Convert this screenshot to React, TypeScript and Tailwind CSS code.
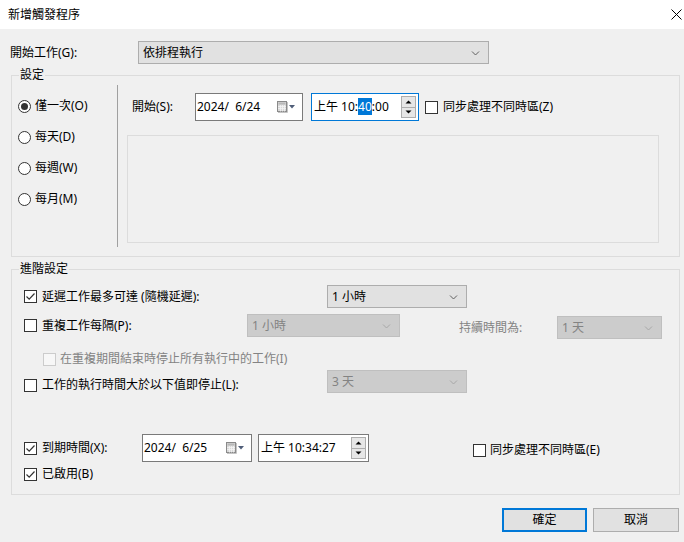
import React from "react";

const Chevron = ({ disabled }: { disabled?: boolean }) => (
  <svg width="9" height="6" viewBox="0 0 9 6" className="shrink-0">
    <path d="M1 1.5 L4.5 5 L8 1.5" fill="none" stroke={disabled ? "#a8a8a8" : "#606060"} strokeWidth="1" />
  </svg>
);

const Select = ({ value, w, disabled }: { value: string; w: string; disabled?: boolean }) => (
  <div
    className={`${w} h-[23px] flex items-center justify-between pl-[4px] pr-[8px] border ${
      disabled ? "bg-[#cccccc] border-[#bfbfbf] text-[#838383]" : "bg-[#e1e1e1] border-[#adadad] text-black"
    }`}
  >
    <span>{value}</span>
    <Chevron disabled={disabled} />
  </div>
);

const Checkbox = ({ checked, disabled }: { checked?: boolean; disabled?: boolean }) => (
  <div
    className={`w-[13px] h-[13px] shrink-0 border flex items-center justify-center ${
      disabled ? "border-[#cccccc] bg-[#f7f7f7]" : "border-[#333333] bg-white"
    }`}
  >
    {checked && (
      <svg width="11" height="11" viewBox="0 0 11 11">
        <path d="M1.5 5.5 L4.2 8.2 L9.5 2.5" fill="none" stroke="#333333" strokeWidth="1.2" />
      </svg>
    )}
  </div>
);

const Radio = ({ checked }: { checked?: boolean }) => (
  <div className="w-[13px] h-[13px] shrink-0 rounded-full border border-[#333333] bg-white flex items-center justify-center">
    {checked && <div className="w-[7px] h-[7px] rounded-full bg-[#333333]" />}
  </div>
);

const CalendarIcon = () => (
  <svg width="20" height="12" viewBox="0 0 20 12" className="shrink-0">
    <rect x="1.5" y="0.5" width="9" height="10" fill="#d8d8d8" stroke="#8a8a8a" />
    <rect x="2.5" y="1.5" width="7" height="2" fill="#b8b8b8" />
    <path d="M2 5.5 H10 M2 7.5 H10 M4.5 4 V10.5 M6.5 4 V10.5 M8.5 4 V10.5" stroke="#f4f4f4" strokeWidth="0.8" />
    <path d="M2 11.5 H11.5 V1" fill="none" stroke="#c4c4c4" />
    <path d="M13 4 H19 L16 7.5 Z" fill="#4f5d78" />
  </svg>
);

const DateBox = ({ value, w }: { value: string; w: string }) => (
  <div className={`${w} h-[28px] bg-white border border-[#7a7a7a] flex items-center justify-between pl-[1px] pr-[6px]`}>
    <span className="whitespace-pre">{value}</span>
    <CalendarIcon />
  </div>
);

const Spinner = () => (
  <div className="flex flex-col w-[15px] h-[22px] mr-[2px] shrink-0">
    <div className="flex-1 border border-[#adadad] bg-[#e6e6e6] flex items-center justify-center">
      <svg width="7" height="4" viewBox="0 0 7 4">
        <path d="M0.5 3.5 L3.5 0.5 L6.5 3.5 Z" fill="#000" />
      </svg>
    </div>
    <div className="flex-1 border border-t-0 border-[#adadad] bg-[#e6e6e6] flex items-center justify-center">
      <svg width="7" height="4" viewBox="0 0 7 4">
        <path d="M0.5 0.5 L3.5 3.5 L6.5 0.5 Z" fill="#000" />
      </svg>
    </div>
  </div>
);

export default function App() {
  return (
    <div className="w-[684px] h-[542px] bg-[#f0f0f0] flex flex-col text-[12px] leading-[16px] text-black font-['Noto_Sans','Noto_Sans_CJK_TC',sans-serif] overflow-hidden">
      {/* title bar */}
      <div className="h-[29px] bg-white flex items-center justify-between pl-[8px] pr-[2px] shrink-0">
        <span>新增觸發程序</span>
        <svg width="11" height="11" viewBox="0 0 11 11">
          <path d="M0.5 0.5 L10.5 10.5 M10.5 0.5 L0.5 10.5" stroke="#000" strokeWidth="1" />
        </svg>
      </div>

      {/* start task */}
      <div className="mt-[12px] flex items-center h-[23px]">
        <span className="pl-[10px] w-[138px]">開始工作(G):</span>
        <Select value="依排程執行" w="w-[351px]" />
      </div>

      {/* settings group */}
      <fieldset className="ml-[11px] w-[669px] mt-[3px] border border-[#dcdcdc] flex">
        <legend className="ml-[7px] px-[1px]">設定</legend>
        <div className="flex w-full">
          <div className="w-[106px] flex shrink-0">
            <div className="flex-1 flex flex-col gap-[15px] pl-[6px] pt-[15px]">
              {[
                ["僅一次(O)", true],
                ["每天(D)", false],
                ["每週(W)", false],
                ["每月(M)", false],
              ].map(([label, checked]) => (
                <div key={label as string} className="flex items-center gap-[4px] h-[16px]">
                  <Radio checked={checked as boolean} />
                  <span>{label as string}</span>
                </div>
              ))}
            </div>
            <div className="w-px bg-[#a0a0a0] mt-[2px] mb-[9px]" />
          </div>
          <div className="flex-1 flex flex-col pt-[10px] pb-[13px]">
            <div className="flex items-center h-[28px]">
              <span className="pl-[14px] w-[77px]">開始(S):</span>
              <DateBox value="2024/  6/24" w="w-[108px]" />
              <div className="ml-[8px] w-[108px] h-[28px] bg-white border border-[#0078d7] flex items-center justify-between pl-[2px]">
                <span>
                  上午 10:<span className="bg-[#0078d7] text-white">40</span>:00
                </span>
                <Spinner />
              </div>
              <div className="ml-[6px] flex items-center gap-[5px]">
                <Checkbox />
                <span>同步處理不同時區(Z)</span>
              </div>
            </div>
            <div className="mt-[14px] ml-[9px] w-[532px] h-[108px] border border-[#dcdcdc]" />
          </div>
        </div>
      </fieldset>

      {/* advanced group */}
      <fieldset className="ml-[11px] w-[669px] mt-[4px] border border-[#dcdcdc] pb-[12px]">
        <legend className="ml-[7px] px-[1px]">進階設定</legend>
        <div className="flex flex-col">
          <div className="mt-[8px] flex items-center h-[23px] pl-[12px]">
            <div className="w-[303px] flex items-center gap-[5px]">
              <Checkbox checked />
              <span>延遲工作最多可達 (隨機延遲):</span>
            </div>
            <Select value="1 小時" w="w-[140px]" />
          </div>

          <div className="mt-[6px] flex items-start h-[25px] pl-[12px]">
            <div className="w-[223px] h-[23px] flex items-center gap-[5px]">
              <Checkbox />
              <span>重複工作每隔(P):</span>
            </div>
            <Select value="1 小時" w="w-[153px]" disabled />
            <span className="ml-[59px] w-[98px] h-[23px] mt-[2px] flex items-center text-[#838383]">持續時間為:</span>
            <div className="mt-[2px]">
              <Select value="1 天" w="w-[105px]" disabled />
            </div>
          </div>

          <div className="mt-[12px] flex items-center h-[16px] pl-[31px] gap-[4px]">
            <Checkbox disabled />
            <span className="text-[#838383]">在重複期間結束時停止所有執行中的工作(I)</span>
          </div>

          <div className="mt-[3px] flex items-start h-[23px] pl-[12px]">
            <div className="w-[303px] h-[16px] mt-[7px] flex items-center gap-[5px]">
              <Checkbox />
              <span>工作的執行時間大於以下值即停止(L):</span>
            </div>
            <Select value="3 天" w="w-[140px]" disabled />
          </div>

          <div className="mt-[41px] flex items-center h-[28px] pl-[12px]">
            <div className="w-[118px] flex items-center gap-[5px]">
              <Checkbox checked />
              <span>到期時間(X):</span>
            </div>
            <DateBox value="2024/  6/25" w="w-[110px]" />
            <div className="ml-[6px] w-[111px] h-[28px] bg-white border border-[#7a7a7a] flex items-center justify-between pl-[2px]">
              <span>上午 10:34:27</span>
              <Spinner />
            </div>
            <div className="ml-[104px] mt-[4px] flex items-center gap-[4px]">
              <Checkbox />
              <span>同步處理不同時區(E)</span>
            </div>
          </div>

          <div className="mt-[4px] flex items-center h-[16px] pl-[12px] gap-[5px]">
            <Checkbox checked />
            <span>已啟用(B)</span>
          </div>
        </div>
      </fieldset>

      {/* buttons */}
      <div className="mt-[13px] flex justify-end pr-[5px] gap-[6px]">
        <button className="w-[85px] h-[24px] border-2 border-[#0078d7] bg-[#e1e1e1] flex items-center justify-center">
          確定
        </button>
        <button className="w-[86px] h-[24px] border border-[#adadad] bg-[#e1e1e1] flex items-center justify-center">
          取消
        </button>
      </div>
    </div>
  );
}
